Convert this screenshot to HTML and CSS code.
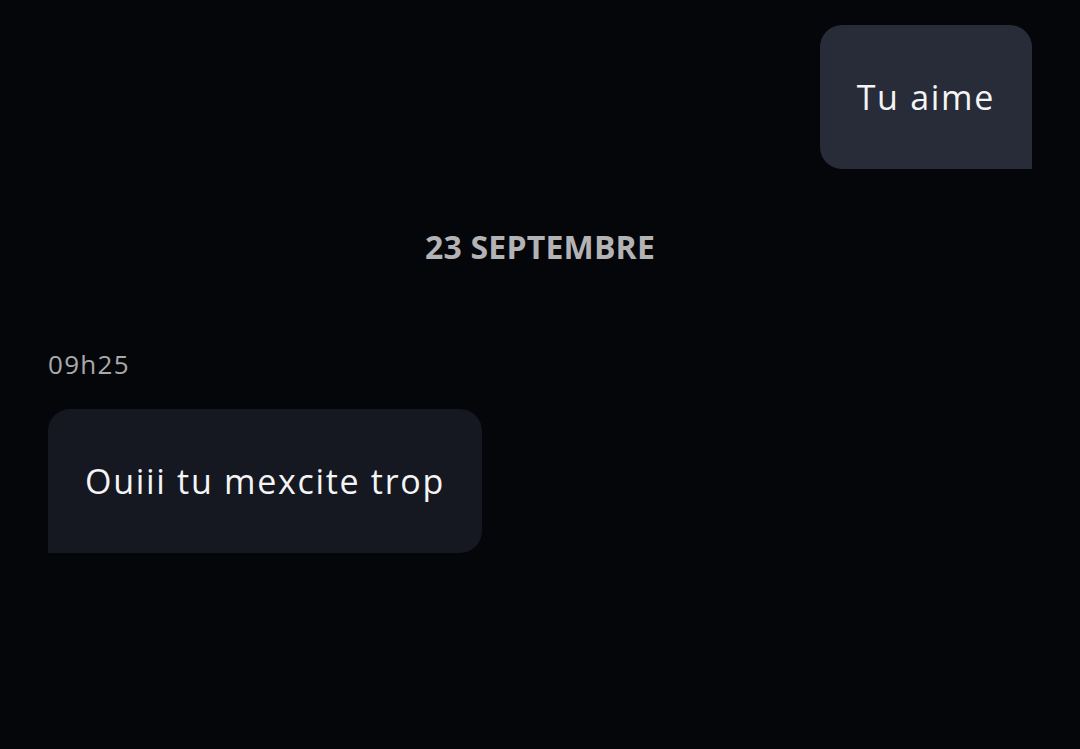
FILE: index.html
```html
<!DOCTYPE html>
<html lang="fr">
<head>
<meta charset="utf-8">
<link rel="stylesheet" href="styles.css">
</head>
<body>
<main class="chat">
  <div class="row row-out">
    <div class="bubble bubble-out">Tu aime</div>
  </div>
  <div class="date">23 SEPTEMBRE</div>
  <div class="time">09h25</div>
  <div class="row row-in">
    <div class="bubble bubble-in">Ouiii tu mexcite trop</div>
  </div>
</main>
</body>
</html>
```
FILE: styles.css
```css
html, body {
  margin: 0;
  padding: 0;
  background: #05060a;
  height: 100%;
}
.chat {
  display: flex;
  flex-direction: column;
  padding: 25px 48px 0 48px;
  font-family: "Open Sans", "Noto Sans", sans-serif;
}
.row {
  display: flex;
}
.row-out {
  justify-content: flex-end;
}
.row-in {
  justify-content: flex-start;
  margin-top: 28px;
}
.bubble {
  height: 144px;
  box-sizing: border-box;
  display: flex;
  align-items: center;
  padding: 0 37px;
  font-size: 34px;
  color: #f4f4f6;
  letter-spacing: 1.7px;
}
.bubble-out {
  background: #272c38;
  border-radius: 22px 22px 0 22px;
}
.bubble-in {
  background: #151820;
  border-radius: 22px 22px 22px 0;
}
.date {
  margin-top: 56px;
  text-align: center;
  font-size: 32px;
  font-weight: 700;
  color: #b3b3b5;
  line-height: 44px;
  letter-spacing: 0.2px;
}
.time {
  margin-top: 78px;
  font-size: 26px;
  color: #a9a9ab;
  line-height: 34px;
  letter-spacing: 1.3px;
}
```
